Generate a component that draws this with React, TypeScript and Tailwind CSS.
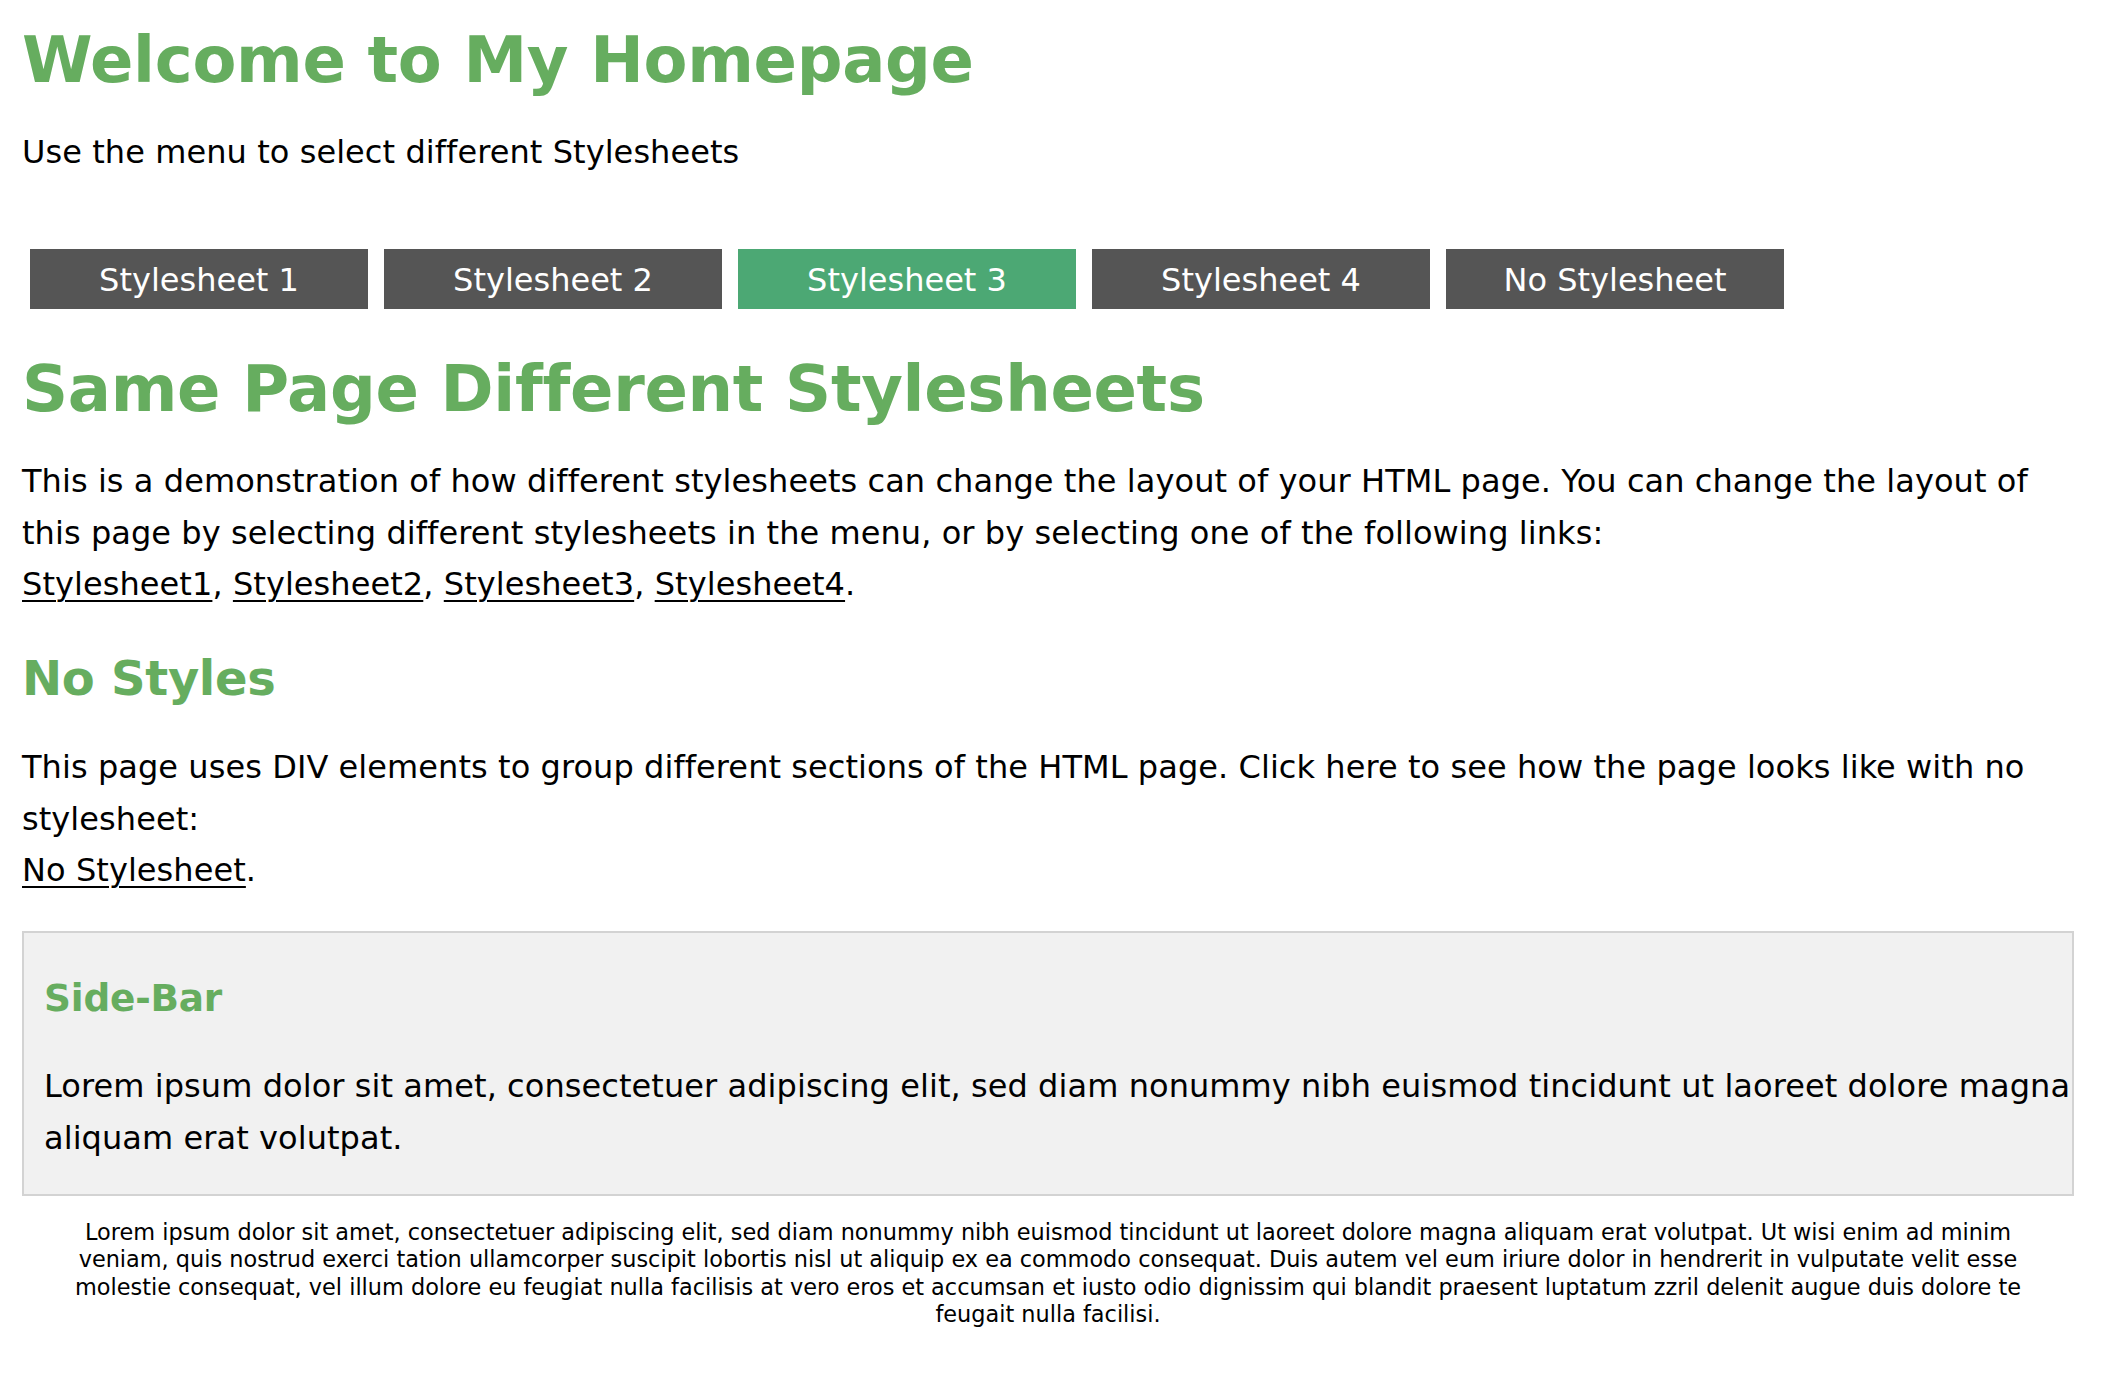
import React from "react";

const font = "font-['DejaVu_Sans',Verdana,sans-serif]";

function NavButton({ label, active }: { label: string; active?: boolean }) {
  return (
    <a
      href="#"
      className={
        "block w-[338px] h-[60px] pt-[2px] text-center text-[32px] leading-[58px] text-white " +
        (active ? "bg-[#4ca874]" : "bg-[#555555]")
      }
    >
      {label}
    </a>
  );
}

export default function App() {
  return (
    <div className={`${font} w-[2074px] pl-[22px] text-black bg-white min-h-[1382px]`}>
      <h1 className="pt-[28px] text-[64px] leading-[64px] font-bold tracking-[-0.3px] text-[#66ad5f] whitespace-nowrap">
        Welcome to My Homepage
      </h1>
      <p className="mt-[35.3px] text-[32px] leading-[51.2px] tracking-[0.07px] whitespace-nowrap">
        Use the menu to select different Stylesheets
      </p>

      <nav className="mt-[70.5px] pl-[8px] flex gap-[16px]">
        <NavButton label="Stylesheet 1" />
        <NavButton label="Stylesheet 2" />
        <NavButton label="Stylesheet 3" active />
        <NavButton label="Stylesheet 4" />
        <NavButton label="No Stylesheet" />
      </nav>

      <h2 className="mt-[48px] text-[64px] leading-[64px] font-bold tracking-[-0.3px] text-[#66ad5f] whitespace-nowrap">
        Same Page Different Stylesheets
      </h2>
      <p className="mt-[35.3px] text-[32px] leading-[51.2px] tracking-[0.07px] whitespace-nowrap">
        This is a demonstration of how different stylesheets can change the layout of your HTML page. You can change the layout of
        <br />
        this page by selecting different stylesheets in the menu, or by selecting one of the following links:
        <br />
        <a href="#" className="underline decoration-[2px] underline-offset-[5px]">Stylesheet1</a>,{" "}
        <a href="#" className="underline decoration-[2px] underline-offset-[5px]">Stylesheet2</a>,{" "}
        <a href="#" className="underline decoration-[2px] underline-offset-[5px]">Stylesheet3</a>,{" "}
        <a href="#" className="underline decoration-[2px] underline-offset-[5px]">Stylesheet4</a>.
      </p>

      <h3 className="mt-[44.5px] text-[48px] leading-[48px] font-bold tracking-[-0.3px] text-[#66ad5f] whitespace-nowrap">
        No Styles
      </h3>
      <p className="mt-[39.9px] text-[32px] leading-[51.2px] tracking-[0.07px] whitespace-nowrap">
        This page uses DIV elements to group different sections of the HTML page. Click here to see how the page looks like with no
        <br />
        stylesheet:
        <br />
        <a href="#" className="underline decoration-[2px] underline-offset-[5px]">No Stylesheet</a>.
      </p>

      <div className="mt-[35.1px] border-[2px] border-[#d3d3d3] bg-[#f1f1f1] px-[20px] pt-[43px] pb-[30.3px]">
        <h3 className="text-[37.44px] leading-[44px] font-bold tracking-[-0.2px] text-[#66ad5f] whitespace-nowrap">Side-Bar</h3>
        <p className="mt-[41.3px] text-[32px] leading-[51.2px] tracking-[0.07px] whitespace-nowrap">
          Lorem ipsum dolor sit amet, consectetuer adipiscing elit, sed diam nonummy nibh euismod tincidunt ut laoreet dolore magna
          <br />
          aliquam erat volutpat.
        </p>
      </div>

      <footer className="mt-[22.5px] text-center text-[22.4px] leading-[27.5px] whitespace-nowrap">
        Lorem ipsum dolor sit amet, consectetuer adipiscing elit, sed diam nonummy nibh euismod tincidunt ut laoreet dolore magna aliquam erat volutpat. Ut wisi enim ad minim
        <br />
        veniam, quis nostrud exerci tation ullamcorper suscipit lobortis nisl ut aliquip ex ea commodo consequat. Duis autem vel eum iriure dolor in hendrerit in vulputate velit esse
        <br />
        molestie consequat, vel illum dolore eu feugiat nulla facilisis at vero eros et accumsan et iusto odio dignissim qui blandit praesent luptatum zzril delenit augue duis dolore te
        <br />
        feugait nulla facilisi.
      </footer>
    </div>
  );
}
